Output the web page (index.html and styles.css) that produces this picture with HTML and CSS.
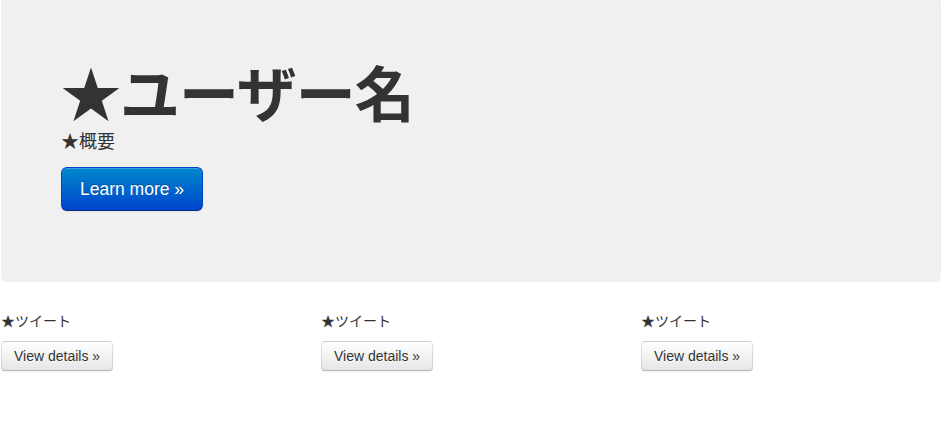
FILE: index.html
```html
<!DOCTYPE html>
<html lang="ja">
  <head>
    <meta charset="UTF-8">
    <meta name="viewport" content="width=device-width">
    <title>ユーザー名</title>
    <link rel="stylesheet" href="styles.css">
  </head>
  <body>
    <div class="container">
      <div class="hero-unit">
        <h1>★ユーザー名</h1>
        <p>★概要</p>
        <p><a class="btn btn-primary btn-large" href="#">Learn more &raquo;</a></p>
      </div>

      <div class="row">
        <div class="span4">
          <p>★ツイート</p>
          <p><a class="btn" href="#">View details &raquo;</a></p>
        </div>
        <div class="span4">
          <p>★ツイート</p>
          <p><a class="btn" href="#">View details &raquo;</a></p>
        </div>
        <div class="span4">
          <p>★ツイート</p>
          <p><a class="btn" href="#">View details &raquo;</a></p>
        </div>
      </div>
    </div>
  </body>
</html>
```

FILE: styles.css
```css
html {
  background: #fff;
}
body {
  margin: 0;
  font-family: "Liberation Sans", "Noto Sans CJK JP", sans-serif;
  font-size: 14px;
  line-height: 20px;
  color: #333;
}
.container {
  width: 940px;
  margin: -3px 0 0 1px;
}
p {
  margin: 0 0 10px;
}
h1 {
  margin: 10px 0 0;
  font-size: 60px;
  line-height: 1;
  letter-spacing: -1px;
  font-weight: bold;
  color: inherit;
}
.hero-unit {
  padding: 60px 60px 61px;
  margin-bottom: 29px;
  background: #f0f0f0;
  border-radius: 6px;
}
.hero-unit p {
  font-size: 18px;
  line-height: 30px;
}
.row {
  display: grid;
  grid-template-columns: repeat(3, 300px);
  gap: 20px;
}
.btn {
  display: inline-block;
  padding: 4px 12px;
  font-size: 14px;
  line-height: 20px;
  color: #333;
  text-align: center;
  text-decoration: none;
  text-shadow: 0 1px 1px rgba(255, 255, 255, .75);
  vertical-align: middle;
  background-color: #f5f5f5;
  background-image: linear-gradient(to bottom, #fff, #e6e6e6);
  border: 1px solid #ccc;
  border-color: rgba(0, 0, 0, .1) rgba(0, 0, 0, .1) rgba(0, 0, 0, .25);
  border-bottom-color: #b3b3b3;
  border-radius: 4px;
  box-shadow: inset 0 1px 0 rgba(255, 255, 255, .2), 0 1px 2px rgba(0, 0, 0, .05);
}
.btn-large {
  padding: 11px 18px;
  font-size: 17.5px;
  border-radius: 6px;
}
.btn-primary {
  color: #fff;
  text-shadow: 0 -1px 0 rgba(0, 0, 0, .25);
  background-color: #006dcc;
  background-image: linear-gradient(to bottom, #08c, #04c);
  border-color: #04c #04c #002a80;
}
```
